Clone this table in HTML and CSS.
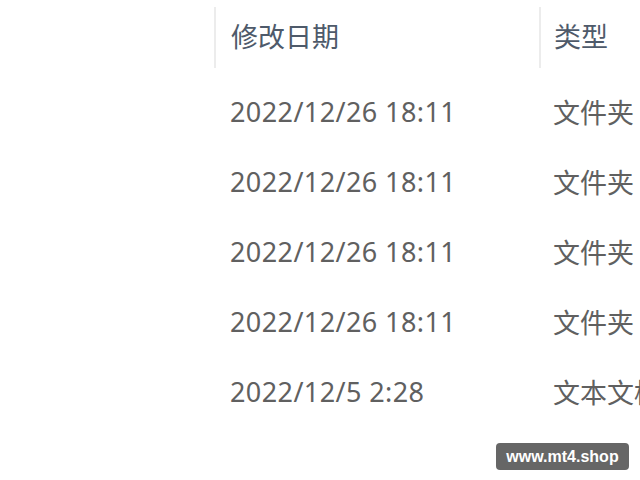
FILE: index.html
```html
<!DOCTYPE html>
<html>
<head>
<meta charset="utf-8">
<link rel="stylesheet" href="styles.css">
</head>
<body>
<div class="list">
  <div class="header">
    <div class="hcell date-col"><span>修改日期</span></div>
    <div class="hcell type-col"><span>类型</span></div>
  </div>
  <div class="row"><div class="cell date-col">2022/12/26 18:11</div><div class="cell type-col">文件夹</div></div>
  <div class="row"><div class="cell date-col">2022/12/26 18:11</div><div class="cell type-col">文件夹</div></div>
  <div class="row"><div class="cell date-col">2022/12/26 18:11</div><div class="cell type-col">文件夹</div></div>
  <div class="row"><div class="cell date-col">2022/12/26 18:11</div><div class="cell type-col">文件夹</div></div>
  <div class="row"><div class="cell date-col">2022/12/5 2:28</div><div class="cell type-col">文本文档</div></div>
</div>
<div class="watermark">www.mt4.shop</div>
</body>
</html>
```
FILE: styles.css
```css
html, body {
  margin: 0;
  padding: 0;
  background: #ffffff;
  width: 640px;
  height: 480px;
  overflow: hidden;
}
body {
  font-family: "Noto Sans", "Noto Sans CJK SC", sans-serif;
  color: #606060;
  position: relative;
}
.list {
  padding-left: 214px;
  width: 640px;
  box-sizing: border-box;
  overflow: hidden;
}
.header {
  display: flex;
  height: 76px;
  align-items: flex-start;
}
.hcell {
  box-sizing: border-box;
  height: 61px;
  margin-top: 7px;
  padding-bottom: 4px;
  border-left: 2px solid #ececec;
  display: flex;
  align-items: center;
  padding-left: 15px;
  font-family: "Noto Sans CJK SC", sans-serif;
  font-size: 27px;
  color: #4e5a6a;
  white-space: nowrap;
}
.hcell.type-col { padding-left: 13px; }
.date-col { width: 325px; flex: none; }
.type-col { width: 120px; flex: none; }
.row {
  display: flex;
  height: 70px;
  align-items: center;
}
.cell {
  box-sizing: border-box;
  padding-left: 16px;
  white-space: nowrap;
  font-size: 27px;
  letter-spacing: 0.4px;
  overflow: hidden;
}
.cell.type-col {
  padding-left: 14px;
  letter-spacing: 0;
  font-family: "Noto Sans CJK SC", sans-serif;
}
.watermark {
  position: absolute;
  left: 496px;
  top: 443px;
  width: 133px;
  height: 27px;
  background: #666666;
  border-radius: 4px;
  color: #ffffff;
  font-family: "Liberation Sans", Arial, sans-serif;
  font-weight: bold;
  font-size: 16px;
  line-height: 27px;
  text-align: center;
}
```
